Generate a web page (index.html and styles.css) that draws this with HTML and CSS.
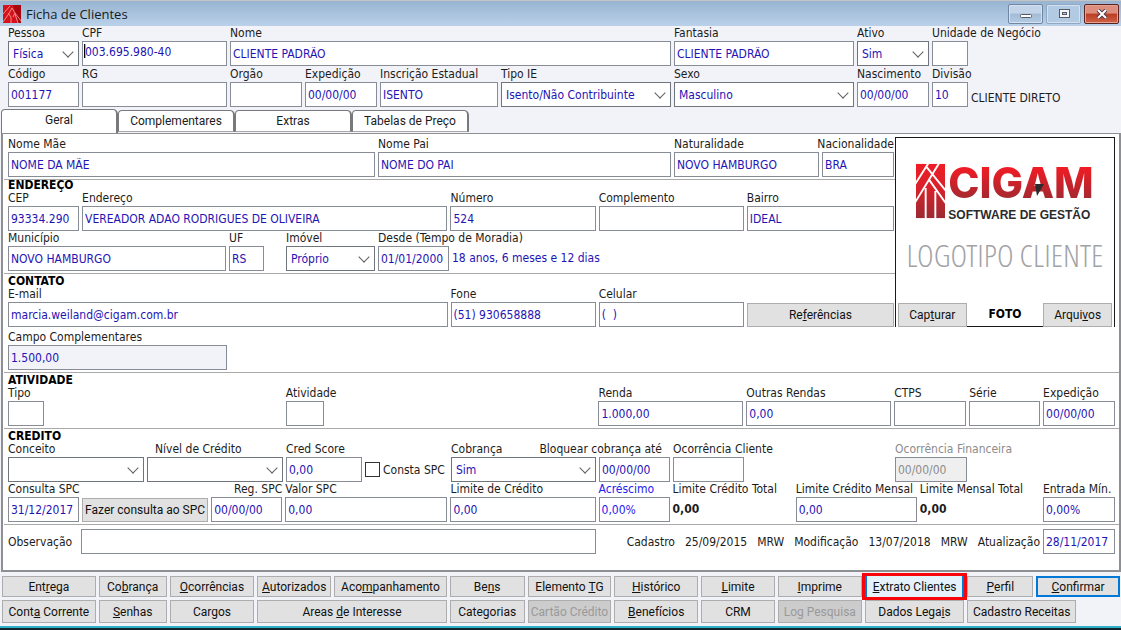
FILE: index.html
```html
<!DOCTYPE html>
<html lang="pt-BR">
<head>
    <meta charset="UTF-8">
    <meta name="viewport" content="width=device-width, initial-scale=1.0">
    <title>Ficha de Clientes</title>
    <link rel="stylesheet" href="styles.css">
</head>
<body>
    <header class="titlebar">
        <svg class="app-icon" viewBox="0 0 18 18" aria-hidden="true">
            <rect width="18" height="18" fill="#d3121c"/>
            <path d="M10 0h8v18h-3z" fill="#a80710"/>
            <path d="M0 9L7 1M0 17L5 10l4-7 3 5 6 8M5 8l3 4v6M12 8l-2 4M12 9l3 9" fill="none" stroke="#f58a84" stroke-width="1"/>
        </svg>
        <h1>Ficha de Clientes</h1>
        <div class="window-buttons">
            <button class="win-btn" aria-label="Minimizar">
                <svg viewBox="0 0 12 10"><rect x="0.5" y="5.5" width="11" height="3" rx="1" fill="#fff" stroke="#555b66"/></svg>
            </button>
            <button class="win-btn win-max" aria-label="Maximizar">
                <svg viewBox="0 0 12 10"><rect x="1.5" y="0.5" width="10" height="8" fill="#f4f6fa" stroke="#555b66"/><rect x="4.5" y="3.5" width="4" height="2" fill="#b3cae3" stroke="#555b66"/></svg>
            </button>
            <button class="win-btn win-close" aria-label="Fechar">
                <svg viewBox="0 0 12 10"><path d="M2 1l8 8M10 1l-8 8" stroke="#4a3a48" stroke-width="4"/><path d="M2 1l8 8M10 1l-8 8" stroke="#fff" stroke-width="2"/></svg>
            </button>
        </div>
    </header>

    <main>
        <!-- Identificação -->
        <div class="ident">
            <div class="row row-ident1">
                <div class="field">
                    <label for="pessoa">Pessoa</label>
                    <span class="select"><select id="pessoa"><option>Física</option></select></span>
                </div>
                <div class="field field-caret">
                    <label for="cpf">CPF</label>
                    <input type="text" id="cpf" class="raised" value="003.695.980-40">
                </div>
                <div class="field">
                    <label for="nome">Nome</label>
                    <input type="text" id="nome" value="CLIENTE PADRÃO">
                </div>
                <div class="field">
                    <label for="fantasia">Fantasia</label>
                    <input type="text" id="fantasia" value="CLIENTE PADRÃO">
                </div>
                <div class="field">
                    <label for="ativo">Ativo</label>
                    <span class="select"><select id="ativo"><option>Sim</option></select></span>
                </div>
                <div class="field">
                    <label for="unidade">Unidade de Negócio</label>
                    <input type="text" id="unidade">
                </div>
            </div>
            <div class="row row-ident2">
                <div class="field">
                    <label for="codigo">Código</label>
                    <input type="text" id="codigo" value="001177">
                </div>
                <div class="field">
                    <label for="rg">RG</label>
                    <input type="text" id="rg">
                </div>
                <div class="field">
                    <label for="orgao">Orgão</label>
                    <input type="text" id="orgao">
                </div>
                <div class="field">
                    <label for="exp-rg">Expedição</label>
                    <input type="text" id="exp-rg" value="00/00/00">
                </div>
                <div class="field">
                    <label for="inscricao">Inscrição Estadual</label>
                    <input type="text" id="inscricao" value="ISENTO">
                </div>
                <div class="field">
                    <label for="tipo-ie">Tipo IE</label>
                    <span class="select"><select id="tipo-ie"><option>Isento/Não Contribuinte</option></select></span>
                </div>
                <div class="field">
                    <label for="sexo">Sexo</label>
                    <span class="select"><select id="sexo"><option>Masculino</option></select></span>
                </div>
                <div class="field">
                    <label for="nascimento">Nascimento</label>
                    <input type="text" id="nascimento" value="00/00/00">
                </div>
                <div class="field">
                    <label for="divisao">Divisão</label>
                    <input type="text" id="divisao" value="10">
                </div>
                <span class="hint">CLIENTE DIRETO</span>
            </div>
        </div>

        <nav class="tabs">
            <button class="tab active">Geral</button>
            <button class="tab">Complementares</button>
            <button class="tab">Extras</button>
            <button class="tab">Tabelas de Preço</button>
        </nav>

        <div class="panel">
            <div class="upper">
                <div class="upper-fields">
                    <section class="section">
                        <div class="row row-filiacao">
                            <div class="field">
                                <label for="mae">Nome Mãe</label>
                                <input type="text" id="mae" value="NOME DA MÃE">
                            </div>
                            <div class="field">
                                <label for="pai">Nome Pai</label>
                                <input type="text" id="pai" value="NOME DO PAI">
                            </div>
                            <div class="field">
                                <label for="naturalidade">Naturalidade</label>
                                <input type="text" id="naturalidade" value="NOVO HAMBURGO">
                            </div>
                            <div class="field label-right">
                                <label for="nacionalidade">Nacionalidade</label>
                                <input type="text" id="nacionalidade" value="BRA">
                            </div>
                        </div>
                    </section>

                    <section class="section">
                        <h2>ENDEREÇO</h2>
                        <div class="row row-endereco1">
                            <div class="field">
                                <label for="cep">CEP</label>
                                <input type="text" id="cep" value="93334.290">
                            </div>
                            <div class="field">
                                <label for="endereco">Endereço</label>
                                <input type="text" id="endereco" value="VEREADOR ADAO RODRIGUES DE OLIVEIRA">
                            </div>
                            <div class="field">
                                <label for="numero">Número</label>
                                <input type="text" id="numero" value="524">
                            </div>
                            <div class="field">
                                <label for="complemento">Complemento</label>
                                <input type="text" id="complemento">
                            </div>
                            <div class="field">
                                <label for="bairro">Bairro</label>
                                <input type="text" id="bairro" value="IDEAL">
                            </div>
                        </div>
                        <div class="row row-endereco2">
                            <div class="field">
                                <label for="municipio">Município</label>
                                <input type="text" id="municipio" value="NOVO HAMBURGO">
                            </div>
                            <div class="field">
                                <label for="uf">UF</label>
                                <input type="text" id="uf" value="RS">
                            </div>
                            <div class="field col-4">
                                <label for="imovel">Imóvel</label>
                                <span class="select"><select id="imovel"><option>Próprio</option></select></span>
                            </div>
                            <div class="field">
                                <label for="desde">Desde (Tempo de Moradia)</label>
                                <input type="text" id="desde" value="01/01/2000">
                            </div>
                            <span class="hint blue">18 anos, 6 meses e 12 dias</span>
                        </div>
                    </section>

                    <section class="section spaced">
                        <h2>CONTATO</h2>
                        <div class="row row-contato">
                            <div class="field">
                                <label for="email">E-mail</label>
                                <input type="text" id="email" value="marcia.weiland@cigam.com.br">
                            </div>
                            <div class="field">
                                <label for="fone">Fone</label>
                                <input type="text" id="fone" value="(51) 930658888">
                            </div>
                            <div class="field">
                                <label for="celular">Celular</label>
                                <input type="text" id="celular" value="(  )">
                            </div>
                            <button class="btn">Re<u>f</u>erências</button>
                        </div>
                        <div class="row row-campo">
                            <div class="field">
                                <label for="campo">Campo Complementares</label>
                                <input type="text" id="campo" class="readonly" value="1.500,00" readonly>
                            </div>
                        </div>
                    </section>
                </div>

                <div class="photo">
                    <div class="photo-view">
                        <div class="brand">
                            <svg class="brand-mark" viewBox="0 0 30 56" aria-hidden="true">
                                <defs>
                                    <linearGradient id="mark" x1="0" y1="0" x2="0" y2="56" gradientUnits="userSpaceOnUse">
                                        <stop offset="0" stop-color="#ee1c25"/>
                                        <stop offset="0.45" stop-color="#d8222b"/>
                                        <stop offset="1" stop-color="#9c2a31"/>
                                    </linearGradient>
                                </defs>
                                <rect width="30" height="56" fill="url(#mark)"/>
                                <path d="M-1 21L13 -1M10 2L31 28M-1 40L24 -1M14 17L31 41M10 25V57M20 28V57" fill="none" stroke="#fff" stroke-width="2"/>
                            </svg>
                            <div class="brand-text">
                                <span class="brand-name">CIGAM</span>
                                <svg class="brand-notch" viewBox="0 0 9 12" aria-hidden="true"><path d="M0 0h9L2 12z" fill="#2b2b2d"/></svg>
                                <span class="brand-sub">SOFTWARE DE GESTÃO</span>
                            </div>
                        </div>
                        <div class="client-logo">LOGOTIPO CLIENTE</div>
                    </div>
                    <div class="photo-bar">
                        <button class="btn">Cap<u>t</u>urar</button>
                        <strong>FOTO</strong>
                        <button class="btn">Arqui<u>v</u>os</button>
                    </div>
                </div>
            </div>

            <section class="section spaced">
                <h2>ATIVIDADE</h2>
                <div class="row row-atividade">
                    <div class="field">
                        <label for="tipo">Tipo</label>
                        <input type="text" id="tipo">
                    </div>
                    <div class="field col-3">
                        <label for="atividade">Atividade</label>
                        <input type="text" id="atividade">
                    </div>
                    <div class="field col-5">
                        <label for="renda">Renda</label>
                        <input type="text" id="renda" value="1.000,00">
                    </div>
                    <div class="field">
                        <label for="outras">Outras Rendas</label>
                        <input type="text" id="outras" value="0,00">
                    </div>
                    <div class="field">
                        <label for="ctps">CTPS</label>
                        <input type="text" id="ctps">
                    </div>
                    <div class="field">
                        <label for="serie">Série</label>
                        <input type="text" id="serie">
                    </div>
                    <div class="field">
                        <label for="exp-ctps">Expedição</label>
                        <input type="text" id="exp-ctps" value="00/00/00">
                    </div>
                </div>
            </section>

            <section class="section spaced">
                <h2>CREDITO</h2>
                <div class="row row-credito1">
                    <div class="field">
                        <label for="conceito">Conceito</label>
                        <span class="select"><select id="conceito"><option></option></select></span>
                    </div>
                    <div class="field label-indent">
                        <label for="nivel">Nível de Crédito</label>
                        <span class="select"><select id="nivel"><option></option></select></span>
                    </div>
                    <div class="field">
                        <label for="score">Cred Score</label>
                        <input type="text" id="score" value="0,00">
                    </div>
                    <label class="check"><input type="checkbox">Consta SPC</label>
                    <div class="field">
                        <label for="cobranca">Cobrança</label>
                        <span class="select"><select id="cobranca"><option>Sim</option></select></span>
                    </div>
                    <div class="field label-right label-inset">
                        <label for="bloquear">Bloquear cobrança até</label>
                        <input type="text" id="bloquear" value="00/00/00">
                    </div>
                    <div class="field">
                        <label for="ocor-cli">Ocorrência Cliente</label>
                        <input type="text" id="ocor-cli">
                    </div>
                    <div class="field disabled col-9">
                        <label for="ocor-fin">Ocorrência Financeira</label>
                        <input type="text" id="ocor-fin" value="00/00/00" disabled>
                    </div>
                </div>
                <div class="row row-credito2">
                    <div class="field">
                        <label for="consulta">Consulta SPC</label>
                        <input type="text" id="consulta" value="31/12/2017">
                    </div>
                    <button class="btn">Fazer consulta ao SPC</button>
                    <div class="field label-right">
                        <label for="reg-spc">Reg. SPC</label>
                        <input type="text" id="reg-spc" value="00/00/00">
                    </div>
                    <div class="field">
                        <label for="valor-spc">Valor SPC</label>
                        <input type="text" id="valor-spc" value="0,00">
                    </div>
                    <div class="field">
                        <label for="limite">Limite de Crédito</label>
                        <input type="text" id="limite" value="0,00">
                    </div>
                    <div class="field accent">
                        <label for="acrescimo">Acréscimo</label>
                        <input type="text" id="acrescimo" value="0,00%">
                    </div>
                    <div class="field">
                        <span class="caption">Limite Crédito Total</span>
                        <output>0,00</output>
                    </div>
                    <div class="field">
                        <label for="mensal">Limite Crédito Mensal</label>
                        <input type="text" id="mensal" value="0,00">
                    </div>
                    <div class="field">
                        <span class="caption">Limite Mensal Total</span>
                        <output>0,00</output>
                    </div>
                    <div class="field">
                        <label for="entrada">Entrada Mín.</label>
                        <input type="text" id="entrada" value="0,00%">
                    </div>
                </div>
            </section>

            <section class="section notes">
                <div class="row row-obs">
                    <label for="obs">Observação</label>
                    <input type="text" id="obs">
                    <div class="audit">
                        <span>Cadastro</span>
                        <span>25/09/2015</span>
                        <span>MRW</span>
                        <span>Modificação</span>
                        <span>13/07/2018</span>
                        <span>MRW</span>
                        <label for="atualizacao">Atualização</label>
                    </div>
                    <input type="text" id="atualizacao" value="28/11/2017">
                </div>
            </section>
        </div>
    </main>

    <footer class="actions">
        <button class="btn">Ent<u>r</u>ega</button>
        <button class="btn">Co<u>b</u>rança</button>
        <button class="btn"><u>O</u>corrências</button>
        <button class="btn"><u>A</u>utorizados</button>
        <button class="btn">Aco<u>m</u>panhamento</button>
        <button class="btn">Be<u>n</u>s</button>
        <button class="btn">Elemento <u>T</u>G</button>
        <button class="btn"><u>H</u>istórico</button>
        <button class="btn"><u>L</u>imite</button>
        <button class="btn"><u>I</u>mprime</button>
        <button class="btn highlighted"><u>E</u>xtrato Clientes</button>
        <button class="btn"><u>P</u>erfil</button>
        <button class="btn default span-2"><u>C</u>onfirmar</button>

        <button class="btn">Cont<u>a</u> Corrente</button>
        <button class="btn"><u>S</u>enhas</button>
        <button class="btn">Cargos</button>
        <button class="btn span-2">Areas <u>d</u>e Interesse</button>
        <button class="btn">Categorias</button>
        <button class="btn" disabled>Cartão Crédito</button>
        <button class="btn"><u>B</u>enefícios</button>
        <button class="btn">CRM</button>
        <button class="btn" disabled>Log Pesquisa</button>
        <button class="btn">Dados Lega<u>i</u>s</button>
        <button class="btn span-2">Cadastro Receitas</button>
    </footer>
</body>
</html>
```

FILE: styles.css
```css
* {
    box-sizing: border-box;
    margin: 0;
    padding: 0;
}

body {
    display: flex;
    flex-direction: column;
    min-height: 100vh;
    background-color: #f2f3f9;
    border-bottom: 2px solid #10252c;
    font-family: "DejaVu Sans Condensed", "DejaVu Sans", sans-serif;
    font-size: 12px;
    color: #1c1c1c;
}

button, input, select {
    font: inherit;
    color: inherit;
    border-radius: 0;
    min-width: 0;
}

/* Title bar */
.titlebar {
    display: flex;
    align-items: center;
    height: 26px;
    padding: 0 2px 0 3px;
    gap: 5px;
    border-top: 1px solid #c4c4c4;
    background: linear-gradient(#98b4d1, #bad1e9);
}

.titlebar h1 {
    flex: 1;
    font: 13px "Open Sans", sans-serif;
    color: #1a1a1a;
}

.app-icon {
    width: 18px;
    height: 18px;
}

.window-buttons {
    display: flex;
    gap: 3px;
}

.win-btn {
    display: flex;
    align-items: center;
    justify-content: center;
    width: 35px;
    height: 20px;
    border: 1px solid #6f87a3;
    border-radius: 2px;
    box-shadow: inset 0 0 0 1px #d3e1f0;
    background: linear-gradient(#c3d4e8 45%, #a3bbd6 50%, #b4cbe3);
}

.win-btn svg {
    width: 12px;
    height: 10px;
}

.win-max {
    border-color: #8ea8c6;
    background: #b3cae3;
}

.win-close {
    border-color: #5b2220;
    box-shadow: inset 0 0 0 1px #e2a294;
    background: linear-gradient(#dc8f7c 45%, #bb3d23 50%, #cf6348);
}

/* Rows and fields */
main {
    display: flex;
    flex: 1;
    flex-direction: column;
}

.ident {
    display: grid;
    gap: 1px;
    padding: 0 6px 0 8px;
}

.row {
    display: grid;
    column-gap: 3px;
    align-items: end;
}

.row-ident1 {
    grid-template-columns: 71fr 145fr 441fr 180fr 72fr 36fr 144fr;
}

.row-ident2 {
    grid-template-columns: 71fr 145fr 72fr 72fr 118fr 170fr 180fr 72fr 36fr 144fr;
}

.row-filiacao {
    grid-template-columns: 367fr 293fr 145fr 72fr;
}

.row-endereco1 {
    grid-template-columns: 71fr 365fr 145fr 145fr 147fr;
}

.row-endereco2 {
    grid-template-columns: 218fr 35fr 16fr 89fr 71fr 442fr;
}

.row-contato {
    grid-template-columns: 439fr 145fr 145fr 147fr;
}

.row-campo {
    grid-template-columns: 219fr 664fr;
    margin-top: 3px;
}

.row-atividade {
    grid-template-columns: 36fr 236fr 38fr 269fr 145fr 145fr 72fr 71fr 72fr;
}

.row-credito1 {
    grid-template-columns: 136fr 136fr 76fr 83fr 145fr 71fr 71fr 145fr 72fr 145fr;
}

.row-credito2 {
    grid-template-columns: 71fr 126fr 71fr 162fr 145fr 71fr 120fr 121fr 120fr 72fr;
}

.row-obs {
    grid-template-columns: 70fr 515fr 441fr 72fr;
}

.col-3 { grid-column: 3; }
.col-4 { grid-column: 4; }
.col-5 { grid-column: 5; }
.col-9 { grid-column: 9; }
.span-2 { grid-column: span 2; }

.field {
    display: flex;
    flex-direction: column;
    min-width: 0;
}

.field label,
.caption {
    line-height: 15px;
    white-space: nowrap;
}

.label-right label {
    align-self: flex-end;
}

.label-inset label {
    padding-right: 8px;
}

.label-indent label {
    padding-left: 8px;
}

input[type="text"],
select {
    width: 100%;
    height: 25px;
    padding: 0 2px;
    border: 1px solid #888c96;
    background-color: #fff;
    color: #1f14b4;
}

.select {
    display: block;
    position: relative;
}

.select select {
    display: block;
    padding: 0 20px 0 4px;
    border-color: #70747c;
    appearance: none;
}

.select::after {
    content: "";
    position: absolute;
    top: 7px;
    right: 7px;
    width: 7px;
    height: 7px;
    border: solid #606060;
    border-width: 0 1px 1px 0;
    transform: rotate(45deg);
    pointer-events: none;
}

/* Focused field with the text cursor at the first digit */
.field-caret {
    position: relative;
}

.field-caret::after {
    content: "";
    position: absolute;
    top: 18px;
    left: 2px;
    width: 1px;
    height: 14px;
    background-color: #000;
    box-shadow: 1px 0 0 #7ce05a;
}

input.raised {
    padding-bottom: 4px;
}

input.readonly {
    background-color: #f2f3f9;
}

.disabled label {
    color: #8c8c8c;
}

.disabled input[type="text"] {
    background-color: #efefef;
    color: #8c8c8c;
}

.accent,
.accent input[type="text"] {
    color: #2222f0;
}

.field output {
    height: 25px;
    line-height: 25px;
    font-weight: bold;
}

.hint {
    line-height: 25px;
    white-space: nowrap;
}

.blue {
    color: #1f14b4;
}

.ident .hint {
    line-height: 18px;
}

.check {
    display: flex;
    align-items: center;
    gap: 3px;
    height: 25px;
    white-space: nowrap;
}

.check input {
    appearance: none;
    width: 15px;
    height: 15px;
    border: 1px solid #333;
    background-color: #fff;
}

/* Buttons */
.btn {
    height: 24px;
    border: 1px solid #adadad;
    background-color: #e1e1e1;
    color: #111;
    font-family: Roboto, sans-serif;
    font-size: 12px;
    white-space: nowrap;
}

.btn:disabled {
    background-color: #cccccc;
    color: #9a9a9a;
}

/* Tabs */
.tabs {
    display: flex;
    align-items: flex-end;
    height: 24px;
    margin-top: 2px;
    padding-left: 1px;
}

.tab {
    width: 117px;
    height: 22px;
    margin-bottom: 1px;
    border: 1px solid #77797c;
    border-right-width: 2px;
    border-bottom: 1px solid #a9a9a9;
    border-radius: 4px 5px 0 0;
    background-color: #fff;
    font-family: Roboto, sans-serif;
}

.tab.active {
    height: 24px;
    margin-bottom: 0;
    border-bottom: none;
    padding-bottom: 3px;
}

/* Panel */
.panel {
    display: flex;
    flex: 1;
    flex-direction: column;
    margin-left: 1px;
    padding-left: 1px;
    border: 2px solid #8e8f92;
    border-top-width: 1px;
    background-color: #fff;
}

.upper {
    display: grid;
    grid-template-columns: minmax(0, 891fr) minmax(0, 220fr);
    padding-right: 4px;
    border-bottom: 1px solid #a9a9a9;
}

.section {
    padding: 0 4px 2px;
    border-bottom: 1px solid #a9a9a9;
}

.upper-fields .section {
    padding-right: 1px;
}

.upper-fields .section:first-child {
    padding-top: 3px;
}

.upper-fields .section:last-child {
    border-bottom: none;
}

.section.spaced {
    padding-top: 2px;
}

.section h2 {
    font-size: 12px;
    font-weight: bold;
    line-height: 11px;
    color: #000;
}

.section.notes {
    padding-top: 4px;
    border-bottom: none;
}

.row-obs {
    align-items: center;
}

.audit {
    display: flex;
    justify-content: flex-end;
    gap: 10px;
    white-space: nowrap;
}

/* Photo box */
.photo {
    display: flex;
    flex-direction: column;
    align-self: start;
    height: 190px;
    margin-top: 3px;
    border: 1px solid #1a1a1a;
    border-bottom: none;
}

.photo-view {
    display: flex;
    flex: 1;
    flex-direction: column;
    align-items: center;
    padding-top: 21px;
    gap: 12px;
}

.brand {
    display: flex;
    align-items: center;
    gap: 3px;
}

.brand-mark {
    width: 29px;
    height: 56px;
}

.brand-text {
    display: flex;
    position: relative;
    flex-direction: column;
}

.brand-name {
    font: 800 42px/48px Inter, sans-serif;
    background: linear-gradient(#ee1c25 20%, #9c2a31 90%);
    -webkit-background-clip: text;
    background-clip: text;
    color: transparent;
}

.brand-notch {
    position: absolute;
    top: 25px;
    left: 87px;
    width: 9px;
    height: 12px;
}

.brand-sub {
    font: bold 12px/16px "Liberation Sans", sans-serif;
    color: #2b2b2d;
}

.client-logo {
    font: 300 32px/40px "Open Sans Condensed Light", "Noto Sans ExtraCondensed Light", "Noto Sans ExtraCondensed", "Noto Sans Condensed", Lato, sans-serif;
    color: #a2a3a6;
    white-space: nowrap;
}

.photo-bar {
    display: grid;
    grid-template-columns: 68fr 76fr 68fr;
    padding: 0 2px;
}

.photo-bar strong {
    border-bottom: 1px solid #1a1a1a;
    line-height: 23px;
    text-align: center;
    color: #000;
}

/* Bottom button bar */
.actions {
    display: grid;
    grid-template-columns: 94fr 68fr 85fr 74fr 113fr 75fr 84fr 84fr 74fr 84fr 100fr 66fr 40fr 41fr;
    grid-template-rows: 21px 23px;
    gap: 3px;
    padding: 4px 1px 3px 2px;
    border-bottom: 2px solid #2fb0c8;
}

.actions .btn {
    height: auto;
}

.actions .highlighted {
    outline: 3px solid #f8050c;
    border-color: #0078d7;
    border-width: 0 2px;
    background-color: #e5f1fb;
}

.actions .default {
    border: 2px solid #0078d7;
}
```
